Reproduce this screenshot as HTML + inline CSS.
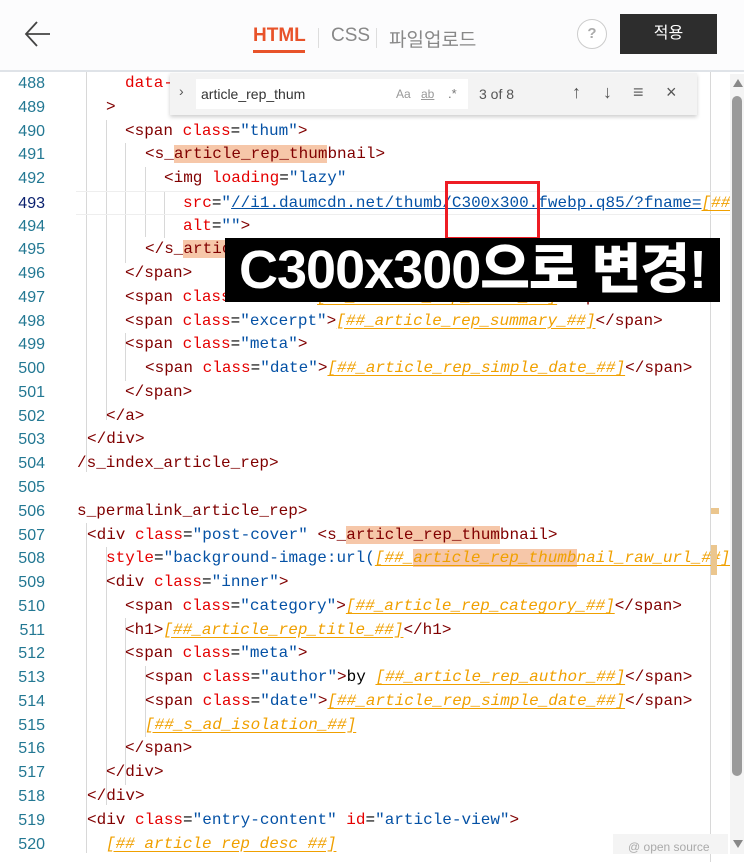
<!DOCTYPE html>
<html><head><meta charset="utf-8"><style>
*{margin:0;padding:0;box-sizing:border-box}
body{width:744px;height:854px;overflow:hidden;background:#fff;position:relative;font-family:"Liberation Sans","Noto Sans CJK KR",sans-serif}
.hdr{position:absolute;left:0;top:0;width:744px;height:72px;background:#fcfcfd;border-bottom:2px solid #dfe3e8}
.tab{position:absolute;top:25px;font-size:19px}
.code{position:absolute;left:0;top:72px;width:730px;font-family:"Liberation Mono",monospace;font-size:16px;line-height:23.78px}
.l{position:relative;height:23.78px;white-space:pre}
.n{position:absolute;left:0;width:45px;text-align:right;color:#237893;font-family:"Liberation Sans",sans-serif;font-size:16px}
.c{position:absolute;top:0}
.t{color:#800000}.a{color:#e50000}.s{color:#0451a5}.k{color:#000}
.o{color:#f0a000;font-style:italic;text-decoration:underline;text-underline-offset:3px}
.h{background:#f6c7a9}
.g{position:absolute;width:1px;background:#d8d8d8}
</style></head><body>
<div class="hdr">
 <svg style="position:absolute;left:24px;top:20px" width="28" height="28" viewBox="0 0 28 28"><path d="M13 2 L2 14 L13 26 M2 14 H26" stroke="#444" stroke-width="1.8" fill="none"/></svg>
 <div class="tab" style="left:253px;color:#e8532a;font-weight:bold">HTML</div>
 <div style="position:absolute;left:253px;top:50px;width:52px;height:3px;background:#e8532a"></div>
 <div style="position:absolute;left:318px;top:28px;width:1px;height:20px;background:#ddd"></div>
 <div class="tab" style="left:331px;color:#888">CSS</div>
 <div style="position:absolute;left:376px;top:28px;width:1px;height:20px;background:#ddd"></div>
 <div class="tab" style="left:389px;color:#888">파일업로드</div>
 <div style="position:absolute;left:577px;top:19px;width:30px;height:30px;border:1px solid #ccc;border-radius:50%;text-align:center;line-height:28px;color:#aaa;font-weight:bold;font-size:15px;background:#fff">?</div>
 <div style="position:absolute;left:620px;top:14px;width:97px;height:40px;background:#2d2d2d;color:#fff;text-align:center;line-height:40px;font-size:16px">적용</div>
</div>
<div class="code">
<div class="g" style="left:86px;top:0;height:400px"></div>
<div class="g" style="left:106px;top:48px;height:300px"></div>
<div class="g" style="left:125px;top:71px;height:120px"></div>
<div class="g" style="left:145px;top:95px;height:70px"></div>
<div class="g" style="left:164px;top:119px;height:47px"></div>
<div class="g" style="left:125px;top:261px;height:48px"></div>
<div class="g" style="left:86px;top:451px;height:330px"></div>
<div class="g" style="left:106px;top:475px;height:258px"></div>
<div class="g" style="left:125px;top:546px;height:167px"></div>
<div class="g" style="left:145px;top:594px;height:71px"></div>
<div class="g" style="left:710px;top:0;height:790px"></div>
<div class="l"><span class="n">488</span><span class="c a" style="left:125px">data-</span></div>
<div class="l"><span class="n">489</span><span class="c t" style="left:106px">&gt;</span></div>
<div class="l"><span class="n">490</span><span class="c t" style="left:125px">&lt;span <span class="a">class</span><span class="k">=</span><span class="s">"thum"</span>&gt;</span></div>
<div class="l"><span class="n">491</span><span class="c t" style="left:145px">&lt;s_<span class="h">article_rep_thum</span>bnail&gt;</span></div>
<div class="l"><span class="n">492</span><span class="c t" style="left:164px">&lt;img <span class="a">loading</span><span class="k">=</span><span class="s">"lazy"</span></span></div>
<div class="l" style="border-top:1px solid #eee;border-bottom:1px solid #eee;margin-left:76px"><span class="n" style="left:-76px;color:#0b216f">493</span><span class="c a" style="left:107px">src<span class="k">=</span><span class="s">"<span style="text-decoration:underline">//i1.daumcdn.net/thumb/C300x300.fwebp.q85/?fname=</span></span><span class="o">[##</span></span></div>
<div class="l"><span class="n">494</span><span class="c a" style="left:183px">alt<span class="k">=</span><span class="s">""</span><span class="t">&gt;</span></span></div>
<div class="l"><span class="n">495</span><span class="c t" style="left:145px">&lt;/s_<span class="h">artic</span></span></div>
<div class="l"><span class="n">496</span><span class="c t" style="left:125px">&lt;/span&gt;</span></div>
<div class="l"><span class="n">497</span><span class="c t" style="left:125px">&lt;span <span class="a">class</span><span class="k">=</span><span class="s">"title"</span>&gt;<span class="o">[##_article_rep_title_##]</span>&lt;/span&gt;</span></div>
<div class="l"><span class="n">498</span><span class="c t" style="left:125px">&lt;span <span class="a">class</span><span class="k">=</span><span class="s">"excerpt"</span>&gt;<span class="o">[##_article_rep_summary_##]</span>&lt;/span&gt;</span></div>
<div class="l"><span class="n">499</span><span class="c t" style="left:125px">&lt;span <span class="a">class</span><span class="k">=</span><span class="s">"meta"</span>&gt;</span></div>
<div class="l"><span class="n">500</span><span class="c t" style="left:145px">&lt;span <span class="a">class</span><span class="k">=</span><span class="s">"date"</span>&gt;<span class="o">[##_article_rep_simple_date_##]</span>&lt;/span&gt;</span></div>
<div class="l"><span class="n">501</span><span class="c t" style="left:125px">&lt;/span&gt;</span></div>
<div class="l"><span class="n">502</span><span class="c t" style="left:106px">&lt;/a&gt;</span></div>
<div class="l"><span class="n">503</span><span class="c t" style="left:87px">&lt;/div&gt;</span></div>
<div class="l"><span class="n">504</span><span class="c t" style="left:77px">/s_index_article_rep&gt;</span></div>
<div class="l"><span class="n">505</span></div>
<div class="l"><span class="n">506</span><span class="c t" style="left:77px">s_permalink_article_rep&gt;</span></div>
<div class="l"><span class="n">507</span><span class="c t" style="left:87px">&lt;div <span class="a">class</span><span class="k">=</span><span class="s">"post-cover"</span> &lt;s_<span class="h">article_rep_thum</span>bnail&gt;</span></div>
<div class="l"><span class="n">508</span><span class="c a" style="left:106px">style<span class="k">=</span><span class="s">"background-image:url(</span><span class="o">[##_<span class="h">article_rep_thumb</span>nail_raw_url_##]</span></span></div>
<div class="l"><span class="n">509</span><span class="c t" style="left:106px">&lt;div <span class="a">class</span><span class="k">=</span><span class="s">"inner"</span>&gt;</span></div>
<div class="l"><span class="n">510</span><span class="c t" style="left:125px">&lt;span <span class="a">class</span><span class="k">=</span><span class="s">"category"</span>&gt;<span class="o">[##_article_rep_category_##]</span>&lt;/span&gt;</span></div>
<div class="l"><span class="n">511</span><span class="c t" style="left:125px">&lt;h1&gt;<span class="o">[##_article_rep_title_##]</span>&lt;/h1&gt;</span></div>
<div class="l"><span class="n">512</span><span class="c t" style="left:125px">&lt;span <span class="a">class</span><span class="k">=</span><span class="s">"meta"</span>&gt;</span></div>
<div class="l"><span class="n">513</span><span class="c t" style="left:145px">&lt;span <span class="a">class</span><span class="k">=</span><span class="s">"author"</span>&gt;<span class="k">by</span> <span class="o">[##_article_rep_author_##]</span>&lt;/span&gt;</span></div>
<div class="l"><span class="n">514</span><span class="c t" style="left:145px">&lt;span <span class="a">class</span><span class="k">=</span><span class="s">"date"</span>&gt;<span class="o">[##_article_rep_simple_date_##]</span>&lt;/span&gt;</span></div>
<div class="l"><span class="n">515</span><span class="c o" style="left:145px">[##_s_ad_isolation_##]</span></div>
<div class="l"><span class="n">516</span><span class="c t" style="left:125px">&lt;/span&gt;</span></div>
<div class="l"><span class="n">517</span><span class="c t" style="left:106px">&lt;/div&gt;</span></div>
<div class="l"><span class="n">518</span><span class="c t" style="left:87px">&lt;/div&gt;</span></div>
<div class="l"><span class="n">519</span><span class="c t" style="left:87px">&lt;div <span class="a">class</span><span class="k">=</span><span class="s">"entry-content"</span> <span class="a">id</span><span class="k">=</span><span class="s">"article-view"</span>&gt;</span></div>
<div class="l"><span class="n">520</span><span class="c o" style="left:106px">[## article rep desc ##]</span></div>
</div>
<div style="position:absolute;left:730px;top:74px;width:14px;height:780px;background:#f4f4f4"></div>
<div style="position:absolute;left:732px;top:96px;width:10px;height:680px;background:#9a9a9a;border-radius:5px"></div>
<div style="position:absolute;left:733px;top:79px;border-left:5px solid transparent;border-right:5px solid transparent;border-bottom:8px solid #888"></div>
<div style="position:absolute;left:733px;top:840px;border-left:5px solid transparent;border-right:5px solid transparent;border-top:8px solid #888"></div>
<div style="position:absolute;left:711px;top:508px;width:8px;height:6px;background:#ebc68e"></div>
<div style="position:absolute;left:711px;top:545px;width:6px;height:30px;background:#ebc68e"></div>
<div style="position:absolute;left:613px;top:834px;width:115px;height:20px;background:#f4f4f4;color:#aaa;font-size:12px;line-height:26px;padding-left:15px">@ open source</div>
<div style="position:absolute;left:170px;top:73px;width:527px;height:42px;background:#f3f3f3;box-shadow:0 2px 4px rgba(0,0,0,.2)">
 <div style="position:absolute;left:9px;top:10px;color:#555;font-size:14px">›</div>
 <div style="position:absolute;left:26px;top:6px;width:272px;height:30px;background:#fff;font-size:14px;line-height:30px;padding-left:5px;color:#333">article_rep_thum
  <span style="position:absolute;left:200px;color:#999;font-size:12px">Aa</span><span style="position:absolute;left:225px;color:#999;font-size:12px;text-decoration:underline">ab</span><span style="position:absolute;left:252px;color:#777;font-size:13px">.*</span></div>
 <div style="position:absolute;left:309px;top:13px;font-size:14px;color:#555">3 of 8</div>
 <div style="position:absolute;left:402px;top:9px;font-size:18px;color:#555">↑</div>
 <div style="position:absolute;left:433px;top:9px;font-size:18px;color:#555">↓</div>
 <div style="position:absolute;left:463px;top:9px;font-size:18px;color:#666">≡</div>
 <div style="position:absolute;left:496px;top:9px;font-size:18px;color:#555">×</div>
</div>
<div style="position:absolute;left:445px;top:181px;width:95px;height:59px;border:3px solid #ee1c24"></div>
<div style="position:absolute;left:225px;top:238px;width:495px;height:64px;background:#000;color:#fff;font-weight:900;font-size:54px;line-height:64px;text-align:center;font-family:'Liberation Sans','Noto Sans CJK KR',sans-serif;letter-spacing:-1px;white-space:nowrap;overflow:hidden">C300x300으로 변경!</div>
</body></html>
